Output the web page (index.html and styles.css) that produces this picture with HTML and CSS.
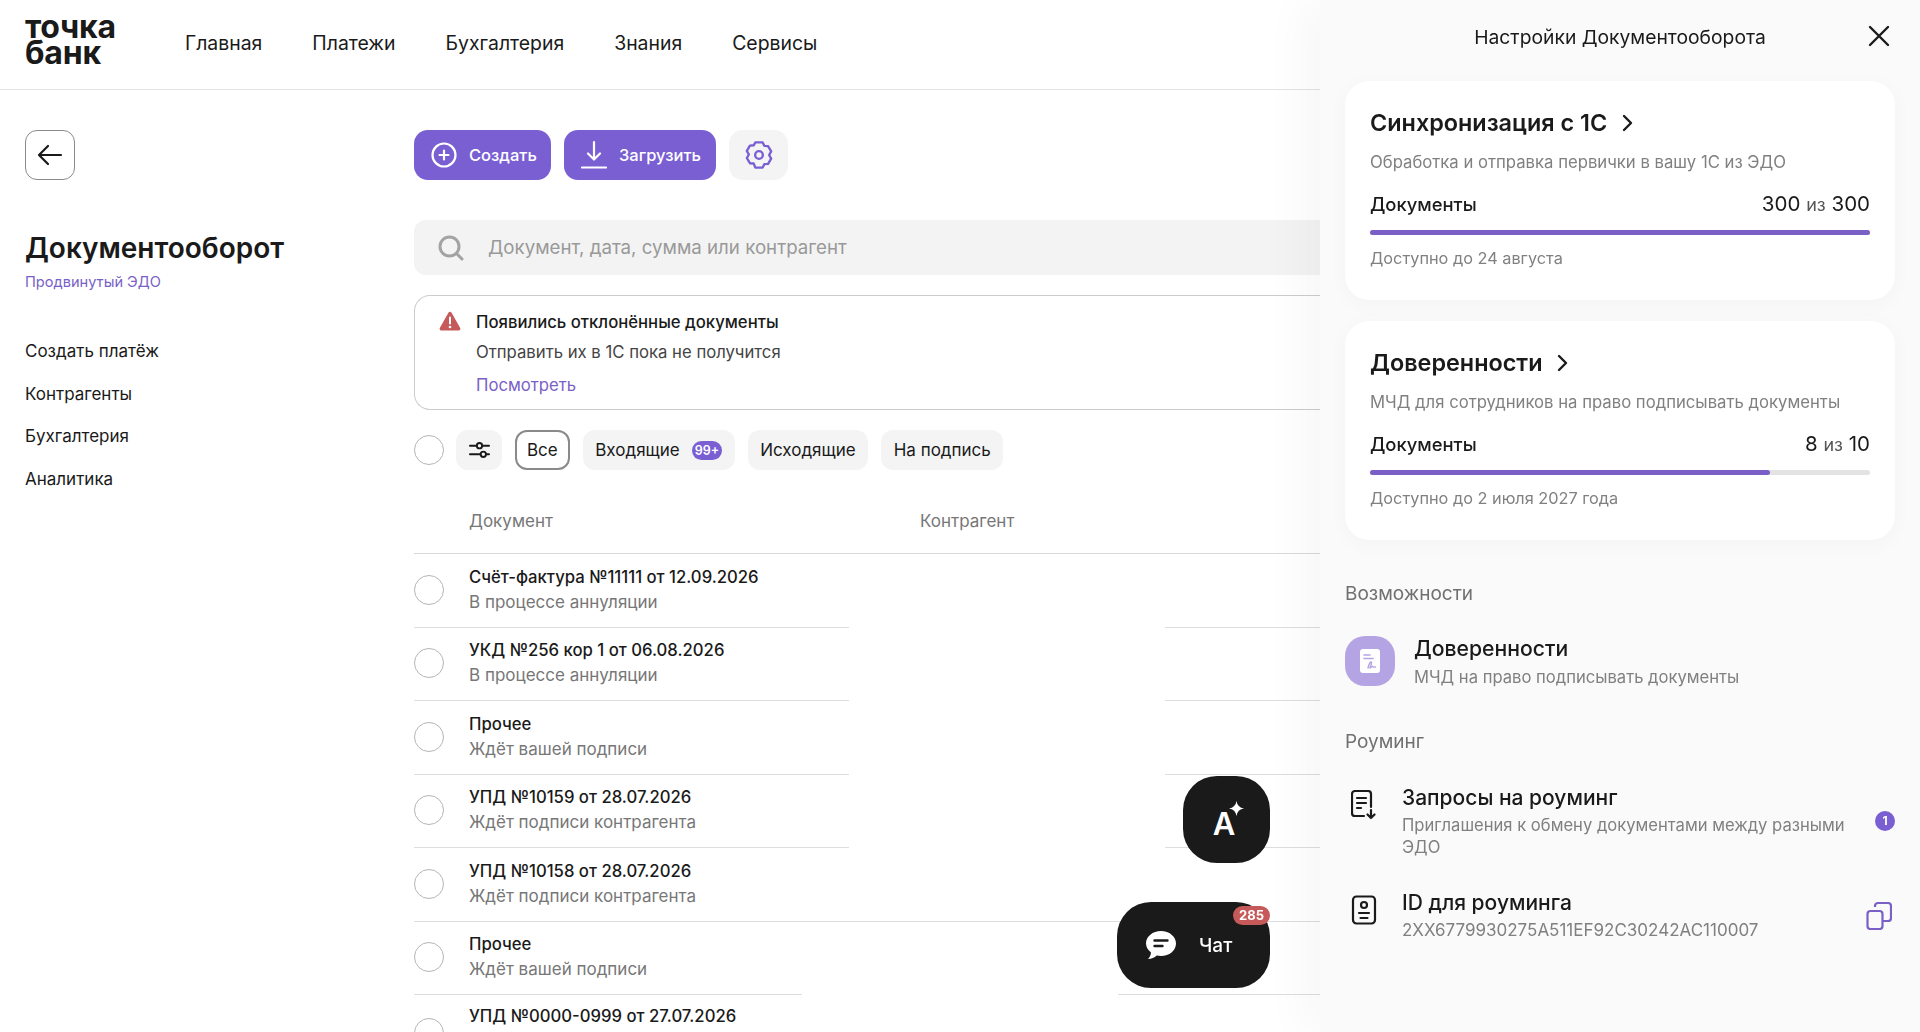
FILE: index.html
```html
<!DOCTYPE html>
<html lang="ru">
<head>
  <meta charset="UTF-8">
  <title>Документооборот</title>
  <link rel="stylesheet" href="styles.css">
</head>
<body>
  <header class="topbar">
    <div class="logo">точка<br>банк</div>
    <nav class="topnav">
      <a>Главная</a>
      <a>Платежи</a>
      <a>Бухгалтерия</a>
      <a>Знания</a>
      <a>Сервисы</a>
    </nav>
  </header>

  <div class="page">
    <aside class="sidebar">
      <button class="back-btn">
        <svg width="28" height="28" viewBox="0 0 28 28" fill="none" stroke="#1a1a1a" stroke-width="2.2" stroke-linecap="round" stroke-linejoin="round"><path d="M25 14H3M12 5l-9 9 9 9"/></svg>
      </button>
      <h1>Документооборот</h1>
      <div class="plan">Продвинутый ЭДО</div>
      <ul class="sidemenu">
        <li>Создать платёж</li>
        <li>Контрагенты</li>
        <li>Бухгалтерия</li>
        <li>Аналитика</li>
      </ul>
    </aside>

    <main class="content">
      <div class="actions">
        <button class="btn btn-create">
          <svg width="26" height="26" viewBox="0 0 26 26" fill="none" stroke="#fff" stroke-width="2.2" stroke-linecap="round"><circle cx="13" cy="13" r="11.5"/><path d="M13 8.5v9M8.5 13h9"/></svg>
          Создать
        </button>
        <button class="btn btn-upload">
          <svg width="26" height="30" viewBox="0 0 26 30" fill="none" stroke="#fff" stroke-width="2.2" stroke-linecap="round" stroke-linejoin="round"><path d="M13 2v17M7 13.5l6 6 6-6M1 27.5h24"/></svg>
          Загрузить
        </button>
        <button class="btn-gear">
          <svg width="32" height="32" viewBox="0 0 30 30" fill="none" stroke="#7a5fd3" stroke-width="2.2" stroke-linejoin="round"><path d="M11.6 3.2h6.8l1.6 3.2 3.5.3 2.9 4.9-1.9 3.4 1.9 3.4-2.9 4.9-3.5.3-1.6 3.2h-6.8L10 23l-3.5-.3-2.900-4.900 1.900-3.300-1.900-3.400 2.900-4.900 3.500-.3z"/><circle cx="15" cy="15" r="3.6"/></svg>
        </button>
      </div>

      <div class="search">
        <svg width="28" height="28" viewBox="0 0 28 28" fill="none" stroke="#a3a3a3" stroke-width="3" stroke-linecap="round"><circle cx="12.5" cy="12.5" r="9.5"/><path d="M20 20l5 5"/></svg>
        <span>Документ, дата, сумма или контрагент</span>
      </div>

      <div class="alert">
        <svg class="alert-icon" width="22" height="20" viewBox="0 0 22 20"><path d="M11 .8c.7 0 1.2.4 1.6 1l8.6 15.3c.6 1.1-.1 2.4-1.4 2.4H2.2C.9 19.5.2 18.200.8 17.100L9.400 1.800c.4-.6.900-1 1.600-1z" fill="#c65a5a"/><path d="M11 6.500v6" stroke="#fff" stroke-width="2" stroke-linecap="round"/><circle cx="11" cy="16" r="1.300" fill="#fff"/></svg>
        <div class="alert-body">
          <div class="alert-title">Появились отклонённые документы</div>
          <div class="alert-text">Отправить их в 1С пока не получится</div>
          <a class="alert-link">Посмотреть</a>
        </div>
      </div>

      <div class="filters">
        <span class="check"></span>
        <button class="chip chip-icon">
          <svg width="22" height="20" viewBox="0 0 22 20" fill="none" stroke="#1a1a1a" stroke-width="2" stroke-linecap="round"><path d="M1 5.500h7M14 5.500h7M1 14.500h11M18 14.500h3"/><circle cx="11" cy="5.500" r="2.800"/><circle cx="15" cy="14.500" r="2.800"/></svg>
        </button>
        <button class="chip chip-active">Все</button>
        <button class="chip">Входящие <span class="count">99+</span></button>
        <button class="chip">Исходящие</button>
        <button class="chip">На подпись</button>
      </div>

      <div class="table-head">
        <span class="col-doc">Документ</span>
        <span>Контрагент</span>
      </div>

      <div class="doc-list">
        <div class="doc">
          <span class="check"></span>
          <div class="doc-text"><div class="doc-name">Счёт-фактура №11111 от 12.09.2026</div><div class="doc-status">В процессе аннуляции</div></div>
          <div class="rule"><i class="rule-a"></i><i class="rule-b"></i></div>
        </div>
        <div class="doc">
          <span class="check"></span>
          <div class="doc-text"><div class="doc-name">УКД №256 кор 1 от 06.08.2026</div><div class="doc-status">В процессе аннуляции</div></div>
          <div class="rule"><i class="rule-a"></i><i class="rule-b"></i></div>
        </div>
        <div class="doc">
          <span class="check"></span>
          <div class="doc-text"><div class="doc-name">Прочее</div><div class="doc-status">Ждёт вашей подписи</div></div>
          <div class="rule"><i class="rule-a"></i><i class="rule-b"></i></div>
        </div>
        <div class="doc">
          <span class="check"></span>
          <div class="doc-text"><div class="doc-name">УПД №10159 от 28.07.2026</div><div class="doc-status">Ждёт подписи контрагента</div></div>
          <div class="rule"><i class="rule-a"></i><i class="rule-b"></i></div>
        </div>
        <div class="doc">
          <span class="check"></span>
          <div class="doc-text"><div class="doc-name">УПД №10158 от 28.07.2026</div><div class="doc-status">Ждёт подписи контрагента</div></div>
          <div class="rule"><i class="rule-full"></i></div>
        </div>
        <div class="doc">
          <span class="check"></span>
          <div class="doc-text"><div class="doc-name">Прочее</div><div class="doc-status">Ждёт вашей подписи</div></div>
          <div class="rule"><i class="rule-c"></i><i class="rule-d"></i></div>
        </div>
        <div class="doc doc-last">
          <span class="check"></span>
          <div class="doc-text"><div class="doc-name">УПД №0000-0999 от 27.07.2026</div></div>
        </div>
      </div>
    </main>
  </div>

  <button class="fab-ai">
    <span>A</span>
    <svg class="fab-star" width="15" height="15" viewBox="0 0 18 18"><path d="M9 0c.8 5.200 3.800 8.200 9 9-5.200.8-8.200 3.800-9 9-.8-5.200-3.800-8.200-9-9 5.200-.8 8.200-3.800 9-9z" fill="#fff"/></svg>
  </button>
  <button class="fab-chat">
    <svg width="32" height="30" viewBox="0 0 32 30"><path d="M16 1c8.300 0 15 5.500 15 12.500S24.300 26 16 26c-1.500 0-3-.2-4.300-.5C9.500 27.500 6.500 29 3 29c1.500-1.500 2.800-3.700 3-6.500C3 20.200 1 17 1 13.500 1 6.500 7.700 1 16 1z" fill="#fff"/><path d="M9.500 10.500h13M9.500 16h8" stroke="#1a1a1a" stroke-width="2.400" stroke-linecap="round"/></svg>
    <span>Чат</span>
    <span class="chat-count">285</span>
  </button>

  <aside class="panel">
    <div class="panel-head">
      <span>Настройки Документооборота</span>
      <svg class="panel-close" width="22" height="22" viewBox="0 0 22 22" fill="none" stroke="#1a1a1a" stroke-width="2.400" stroke-linecap="round"><path d="M2 2l18 18M20 2L2 20"/></svg>
    </div>

    <section class="card">
      <h2>Синхронизация с 1С <svg width="12" height="18" viewBox="0 0 12 18" fill="none" stroke="#1a1a1a" stroke-width="2.400" stroke-linecap="round" stroke-linejoin="round"><path d="M3 2l7 7-7 7"/></svg></h2>
      <p class="card-desc">Обработка и отправка первички в вашу 1С из ЭДО</p>
      <div class="card-row"><span>Документы</span><span class="card-count">300 <small>из</small> 300</span></div>
      <div class="bar"><div class="bar-fill" style="width: 100%"></div></div>
      <p class="card-until">Доступно до 24 августа</p>
    </section>

    <section class="card">
      <h2>Доверенности <svg width="12" height="18" viewBox="0 0 12 18" fill="none" stroke="#1a1a1a" stroke-width="2.400" stroke-linecap="round" stroke-linejoin="round"><path d="M3 2l7 7-7 7"/></svg></h2>
      <p class="card-desc">МЧД для сотрудников на право подписывать документы</p>
      <div class="card-row"><span>Документы</span><span class="card-count">8 <small>из</small> 10</span></div>
      <div class="bar"><div class="bar-fill" style="width: 80%"></div></div>
      <p class="card-until">Доступно до 2 июля 2027 года</p>
    </section>

    <h3 class="panel-section">Возможности</h3>
    <div class="feature">
      <span class="feature-icon">
        <svg width="20" height="24" viewBox="0 0 20 24"><rect width="20" height="24" rx="3" fill="#fff"/><path d="M4 6h6M4 9.500h9" stroke="#b5a4e3" stroke-width="1.600" stroke-linecap="round"/><path d="M8 19c1-5 3-7 3.500-5.500S9.500 19 10 19s1.500-2 2.500-1.500 1 1 3 .5" fill="none" stroke="#b5a4e3" stroke-width="1.400" stroke-linecap="round"/></svg>
      </span>
      <div>
        <div class="feature-name">Доверенности</div>
        <div class="feature-desc">МЧД на право подписывать документы</div>
      </div>
    </div>

    <h3 class="panel-section panel-section-roaming">Роуминг</h3>
    <div class="roam">
      <svg width="26" height="30" viewBox="0 0 26 30" fill="none" stroke="#1a1a1a" stroke-width="2.200" stroke-linecap="round" stroke-linejoin="round"><path d="M13 26H4a3 3 0 0 1-3-3V4a3 3 0 0 1 3-3h13a3 3 0 0 1 3 3v13M6 8h9M6 13h9M6 18h4M20 20v8M16.500 24.500L20 28l3.500-3.500"/></svg>
      <div class="roam-text">
        <div class="roam-name">Запросы на роуминг</div>
        <div class="roam-desc roam-desc-wrap">Приглашения к обмену документами между разными ЭДО</div>
      </div>
      <span class="roam-badge">1</span>
    </div>
    <div class="roam roam-id">
      <svg width="26" height="30" viewBox="0 0 26 30" fill="none" stroke="#1a1a1a" stroke-width="2.200" stroke-linecap="round"><rect x="2" y="1.500" width="22" height="27" rx="3.500"/><circle cx="13" cy="10" r="3"/><path d="M8 18h10M9.500 23h7"/></svg>
      <div class="roam-text">
        <div class="roam-name">ID для роуминга</div>
        <div class="roam-desc">2XX6779930275A511EF92C30242AC110007</div>
      </div>
      <svg class="roam-copy" width="26" height="28" viewBox="0 0 26 28" fill="none" stroke="#7a5fc7" stroke-width="2.200" stroke-linejoin="round"><rect x="1.500" y="9" width="15" height="18" rx="3"/><path d="M9 5V4a3 3 0 0 1 3-3h10a3 3 0 0 1 3 3v12a3 3 0 0 1-3 3h-5"/></svg>
    </div>
  </aside>
</body>
</html>
```
FILE: styles.css
```css
* {
  box-sizing: border-box;
}

html, body {
  height: 100%;
}

body {
  margin: 0;
  overflow: hidden;
  background: #fff;
  color: #1a1a1a;
  font-family: Inter, "Noto Sans", sans-serif;
}

button {
  font-family: inherit;
  border: none;
  cursor: pointer;
}

.topbar {
  display: flex;
  align-items: center;
  height: 90px;
  padding-left: 25px;
  border-bottom: 1px solid #e3e3e3;
}

.logo {
  width: 160px;
  margin-bottom: 9px;
  font-size: 32px;
  font-weight: 700;
  line-height: 26px;
  letter-spacing: -0.2px;
}

.topnav {
  display: flex;
  gap: 50px;
  margin-bottom: 4px;
  font-size: 19.4px;
}

.page {
  display: flex;
}

.sidebar {
  width: 414px;
  padding: 40px 0 0 25px;
}

.back-btn {
  display: flex;
  align-items: center;
  justify-content: center;
  width: 50px;
  height: 50px;
  background: #fff;
  border: 1px solid #8a8a8a;
  border-radius: 12px;
}

.sidebar h1 {
  margin: 50px 0 0;
  font-size: 28px;
  font-weight: 600;
  line-height: 36px;
}

.plan {
  margin-top: 7px;
  font-size: 14.6px;
  color: #7a5fc7;
}

.sidemenu {
  margin: 47px 0 0;
  padding: 0;
  list-style: none;
  font-size: 17px;
}

.sidemenu li {
  height: 42.6px;
  line-height: 26px;
}

.content {
  width: 906px;
  padding-top: 40px;
}

.actions {
  display: flex;
  gap: 13px;
}

.btn {
  display: flex;
  align-items: center;
  gap: 12px;
  height: 50px;
  border-radius: 14px;
  background: #7a5fd3;
  color: #fff;
  font-size: 16.5px;
  font-weight: 500;
}

.btn-create {
  width: 137px;
  padding-left: 17px;
}

.btn-upload {
  width: 152px;
  padding-left: 17px;
}

.btn-gear {
  display: flex;
  align-items: center;
  justify-content: center;
  width: 59px;
  height: 50px;
  border-radius: 14px;
  background: #f4f4f4;
}

.search {
  display: flex;
  align-items: center;
  gap: 23px;
  height: 55px;
  margin-top: 40px;
  padding-left: 23px;
  border-radius: 12px 0 0 12px;
  background: #f3f3f3;
  color: #999;
  font-size: 18.7px;
}

.alert {
  display: flex;
  gap: 15px;
  height: 115px;
  margin-top: 20px;
  padding: 14px 0 0 24px;
  border: 1px solid #ccc;
  border-right: none;
  border-radius: 16px 0 0 16px;
}

.alert-icon {
  margin-top: 1px;
}

.alert-title {
  font-size: 16.7px;
  font-weight: 500;
  line-height: 24px;
}

.alert-text {
  margin-top: 6px;
  font-size: 16.7px;
  line-height: 24px;
  color: #444;
}

.alert-link {
  display: block;
  margin-top: 9px;
  font-size: 16.7px;
  line-height: 24px;
  color: #7a5fc7;
}

.filters {
  display: flex;
  align-items: center;
  gap: 13px;
  margin-top: 20px;
}

.check {
  flex: none;
  display: block;
  width: 30px;
  height: 30px;
  border: 1px solid #b5b5b5;
  border-radius: 50%;
  background: #fff;
}

.chip {
  display: flex;
  align-items: center;
  gap: 12px;
  height: 40px;
  padding: 0 12.5px;
  border-radius: 12px;
  background: #f4f4f4;
  color: #1a1a1a;
  font-size: 17px;
}

.chip-icon {
  justify-content: center;
  width: 46px;
  margin-left: -1px;
}

.chip-active {
  padding: 0 10px;
  background: #fff;
  border: 2px solid #8a8a8a;
}

.count {
  padding: 2px 3px;
  border-radius: 10px;
  background: #7a5fd3;
  color: #fff;
  font-size: 12.5px;
  font-weight: 600;
}

.table-head {
  display: flex;
  align-items: center;
  height: 84px;
  padding: 18px 0 0 55px;
  border-bottom: 1px solid #d9d9d9;
  color: #777;
  font-size: 17px;
}

.col-doc {
  width: 451px;
}

.doc {
  position: relative;
  display: flex;
  align-items: center;
  gap: 25px;
  height: 73.5px;
}

.doc > .check {
  margin-bottom: 2px;
}

.doc-last {
  align-items: flex-start;
  padding-top: 9px;
}

.doc-last > .check {
  margin-top: 14px;
}

.doc-text {
  padding-bottom: 3px;
}

.doc-name {
  font-size: 16.7px;
  font-weight: 500;
  line-height: 24px;
}

.doc-status {
  margin-top: 1px;
  font-size: 17px;
  line-height: 24px;
  color: #777;
}

.rule {
  position: absolute;
  left: 0;
  right: 0;
  bottom: 0;
  display: flex;
  justify-content: space-between;
}

.rule i {
  display: block;
  height: 1px;
  background: #dedede;
}

.rule-a {
  width: 435px;
}

.rule-b {
  width: 155px;
}

.rule-c {
  width: 388px;
}

.rule-d {
  width: 202px;
}

.rule-full {
  width: 100%;
}

.fab-ai {
  position: fixed;
  left: 1183px;
  top: 776px;
  width: 87px;
  height: 87px;
  padding: 8px 5px 0 0;
  border-radius: 34px;
  background: #1a1a1a;
  color: #fff;
  font-size: 31px;
  font-weight: 600;
}

.fab-star {
  position: absolute;
  left: 46px;
  top: 25px;
}

.fab-chat {
  position: fixed;
  left: 1117px;
  top: 902px;
  display: flex;
  align-items: center;
  gap: 22px;
  width: 153px;
  height: 86px;
  padding-left: 28px;
  border-radius: 34px;
  background: #1a1a1a;
  color: #fff;
  font-size: 19px;
  font-weight: 500;
}

.chat-count {
  position: absolute;
  right: 0;
  top: 4px;
  width: 37px;
  height: 19px;
  border-radius: 10px;
  background: #c65a5a;
  font-size: 13px;
  font-weight: 700;
  line-height: 19px;
  text-align: center;
}

.panel {
  position: fixed;
  top: 0;
  right: 0;
  bottom: 0;
  width: 600px;
  padding: 0 25px;
  background: #fafafa;
  box-shadow: -20px 0 40px rgba(0, 0, 0, 0.03);
}

.panel-head {
  position: relative;
  height: 81px;
  padding-top: 24px;
  font-size: 19.3px;
  line-height: 26px;
  text-align: center;
}

.panel-close {
  position: absolute;
  right: 5px;
  top: 25px;
}

.card {
  height: 219px;
  margin-bottom: 21px;
  padding: 25px;
  border-radius: 24px;
  background: #fff;
  box-shadow: 0 4px 20px rgba(0, 0, 0, 0.03);
}

.card h2 {
  display: flex;
  align-items: center;
  gap: 14px;
  margin: 0;
  font-size: 23.4px;
  font-weight: 600;
  line-height: 34px;
}

.card-desc {
  margin: 10px 0 0;
  font-size: 16.7px;
  line-height: 24px;
  color: #808080;
}

.card-row {
  display: flex;
  justify-content: space-between;
  margin-top: 17px;
  font-size: 18.4px;
  font-weight: 500;
  line-height: 26px;
}

.card-count {
  font-size: 20.5px;
  font-weight: 400;
}

.card-count small {
  font-size: 18px;
  color: #555;
}

.bar {
  height: 5px;
  margin-top: 12px;
  border-radius: 3px;
  background: #e3e3e3;
}

.bar-fill {
  height: 100%;
  border-radius: 3px;
  background: #7a5fc7;
}

.card-until {
  margin: 11px 0 0;
  font-size: 16.3px;
  line-height: 24px;
  color: #808080;
}

.panel-section {
  margin: 41px 0 0;
  font-size: 19px;
  font-weight: 400;
  line-height: 26px;
  color: #707070;
}

.panel-section-roaming {
  margin-top: 40px;
}

.feature {
  display: flex;
  align-items: center;
  gap: 19px;
  margin-top: 27px;
}

.feature-icon {
  display: flex;
  align-items: center;
  justify-content: center;
  width: 50px;
  height: 50px;
  margin-bottom: 2px;
  border-radius: 20px;
  background: #b5a4e3;
}

.feature-name {
  font-size: 21.2px;
  font-weight: 500;
  line-height: 28px;
}

.feature-desc {
  margin-top: 3px;
  font-size: 16.6px;
  line-height: 24px;
  color: #808080;
}

.roam {
  display: flex;
  align-items: flex-start;
  gap: 25px;
  margin-top: 29px;
  padding-left: 6px;
}

.roam > svg {
  flex: none;
  margin-top: 6px;
}

.roam-id {
  margin-top: 31px;
}

.roam-text {
  flex: 1;
}

.roam-name {
  font-size: 21px;
  font-weight: 500;
  line-height: 28px;
}

.roam-desc {
  margin-top: 2px;
  font-size: 17px;
  line-height: 22px;
  color: #808080;
}

.roam-desc-wrap {
  font-size: 16.6px;
}

.roam-badge {
  align-self: center;
  flex: none;
  width: 20px;
  height: 20px;
  margin-left: -10px;
  border-radius: 50%;
  background: #7a5fd3;
  color: #fff;
  font-size: 12px;
  font-weight: 700;
  line-height: 20px;
  text-align: center;
}

.roam > svg.roam-copy {
  margin: 13px 3px 0 0;
}
```
